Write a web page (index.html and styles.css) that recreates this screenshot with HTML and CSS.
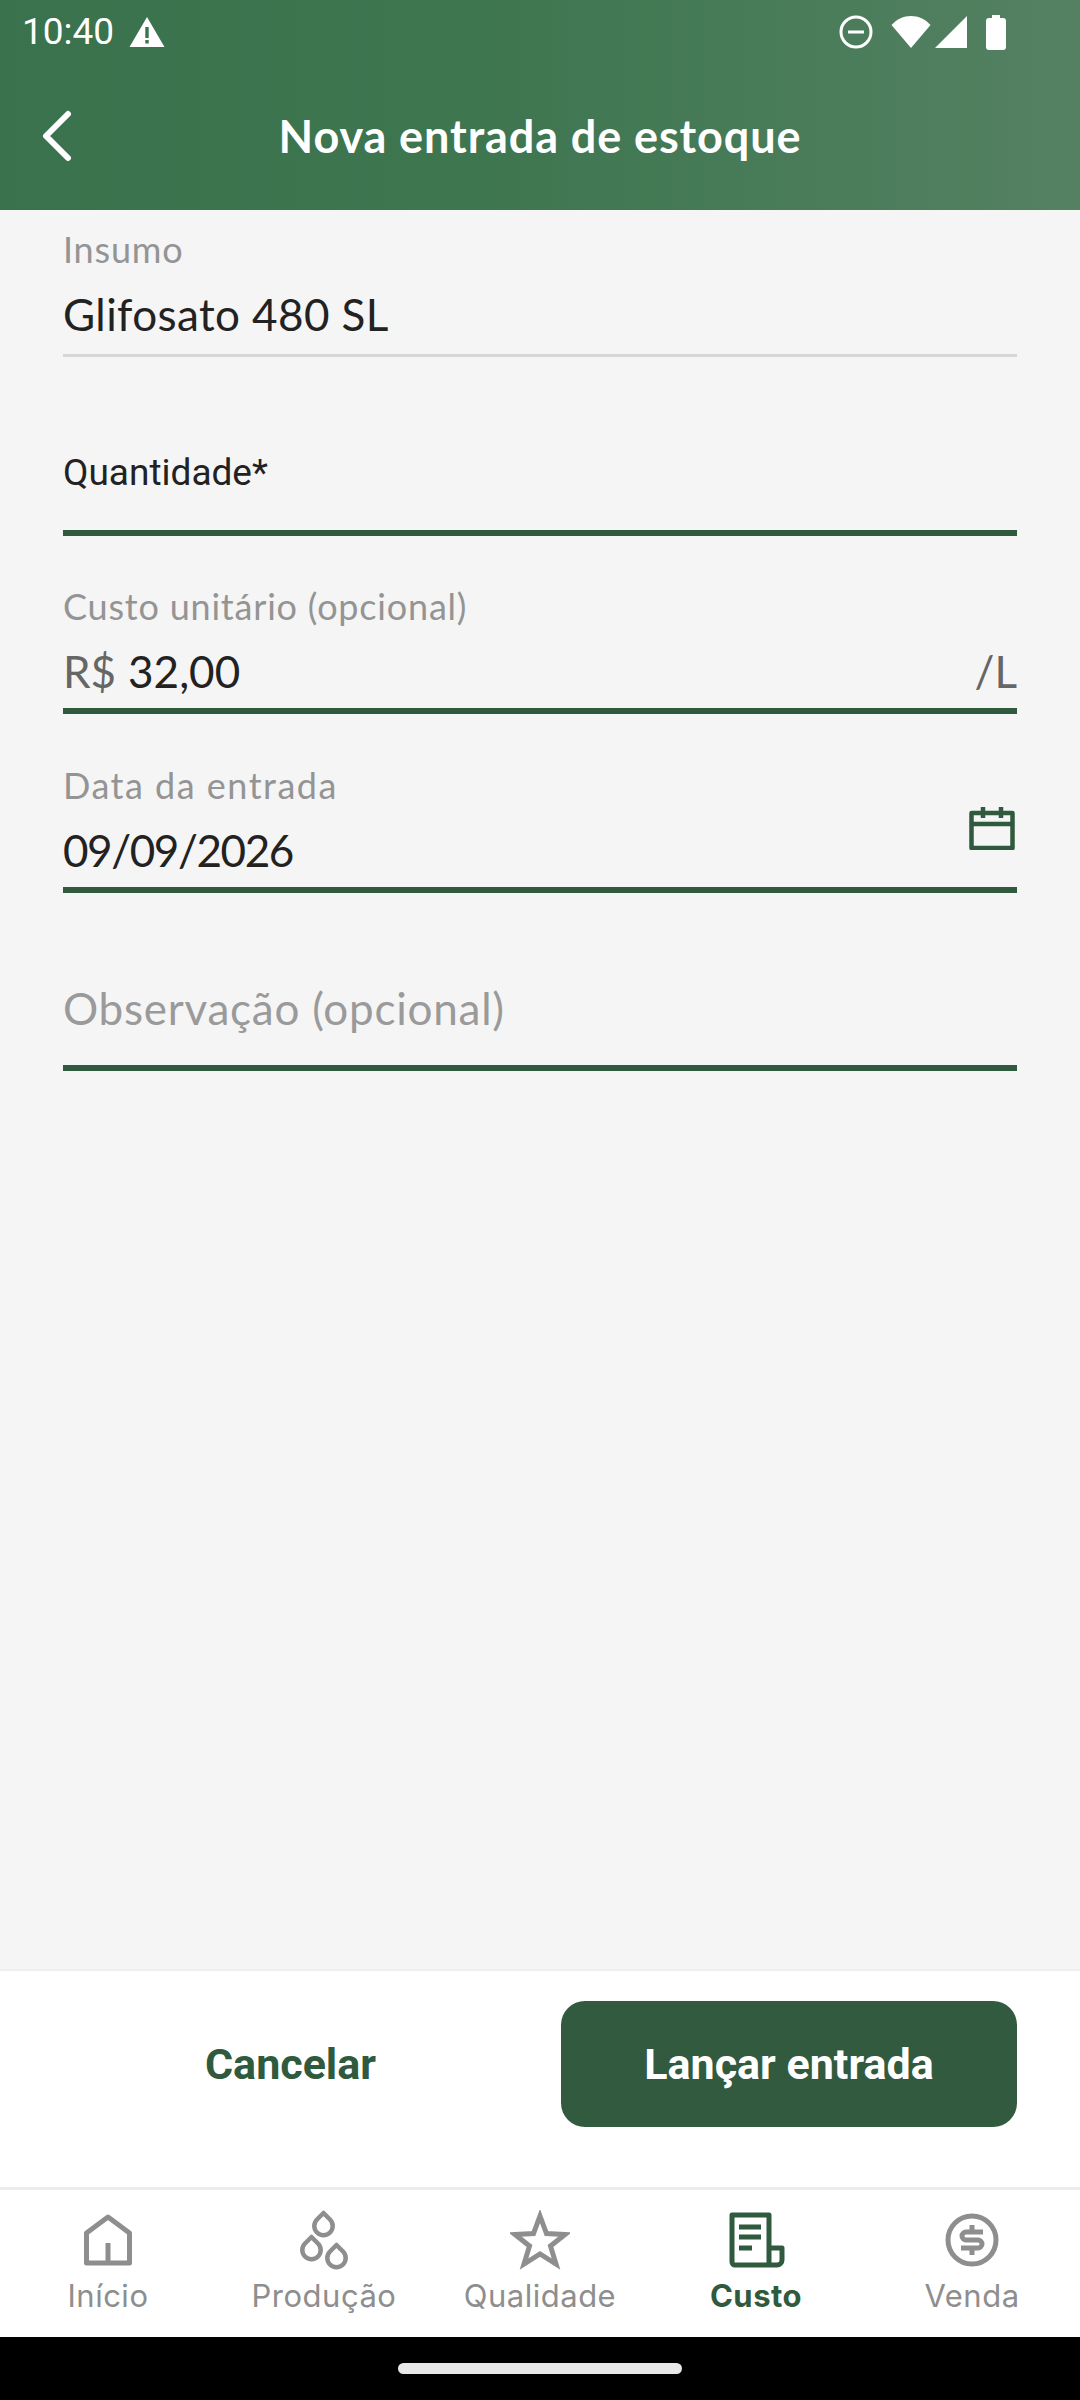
FILE: index.html
```html
<!DOCTYPE html>
<html lang="pt-BR">
<head>
  <meta charset="UTF-8">
  <meta name="viewport" content="width=device-width, initial-scale=1.0">
  <title>Nova entrada de estoque</title>
  <link rel="stylesheet" href="styles.css">
</head>
<body>
  <div class="screen">
    <header class="top">
      <div class="status-bar">
        <span class="time">10:40</span>
        <svg class="alert" width="36" height="32" viewBox="0 0 36 32"><path fill="#fff" fill-rule="evenodd" d="M18 1 35.500 31H.5ZM16.300 11v11h3.400V11Zm0 13v3.500h3.400V24Z"/></svg>
        <span class="status-icons">
          <svg width="34" height="34" viewBox="0 0 34 34"><circle cx="17" cy="17" r="15" fill="none" stroke="#fff" stroke-width="3"/><rect x="9" y="15.500" width="16" height="3" fill="#fff"/></svg>
          <svg width="40" height="34" viewBox="0 0 40 34"><path fill="#fff" d="M20 33 .5 10C6 4 12.500 1 20 1s14 3 19.500 9Z"/></svg>
          <svg width="33" height="34" viewBox="0 0 33 34"><path fill="#fff" d="M32 1v32H0Z"/></svg>
          <svg width="20" height="35" viewBox="0 0 20 35"><path fill="#fff" d="M6 0h8v3h3a3 3 0 0 1 3 3v26a3 3 0 0 1-3 3H3a3 3 0 0 1-3-3V6a3 3 0 0 1 3-3h3Z"/></svg>
        </span>
      </div>
      <div class="app-bar">
        <svg class="back" width="32" height="52" viewBox="0 0 32 52"><path fill="none" stroke="#fff" stroke-width="6" stroke-linecap="round" stroke-linejoin="round" d="M27 4 5 26l22 22"/></svg>
        <h1>Nova entrada de estoque</h1>
      </div>
    </header>

    <main class="form">
      <div class="field field-first">
        <label>Insumo</label>
        <div class="value"><span class="wide">Glifosato 480 SL</span></div>
      </div>
      <div class="field">
        <div class="prompt prompt-dark">Quantidade*</div>
      </div>
      <div class="field">
        <label>Custo unitário (opcional)</label>
        <div class="value">
          <span class="affix">R$</span>
          <span>32,00</span>
          <span class="affix suffix">/L</span>
        </div>
      </div>
      <div class="field">
        <label class="label-wide">Data da entrada</label>
        <div class="value">
          <span class="date">09/09/2026</span>
          <svg class="calendar" width="46" height="44" viewBox="0 0 46 44"><path fill="none" stroke="#2f5a3e" stroke-width="4.500" stroke-linejoin="round" d="M2.500 7h41v35h-41ZM2.500 18h41M14 1v11M32 1v11"/></svg>
        </div>
      </div>
      <div class="field">
        <div class="prompt">Observação (opcional)</div>
      </div>
    </main>

    <div class="actions">
      <button class="btn btn-text">Cancelar</button>
      <button class="btn btn-solid">Lançar entrada</button>
    </div>

    <nav class="tabs">
      <a class="tab">
        <svg width="60" height="60" viewBox="0 0 60 60"><path fill="none" stroke="#8e8e8e" stroke-width="5" stroke-linejoin="round" d="M30 7 8.500 23v30h43V23ZM30 53V33"/></svg>
        <span>Início</span>
      </a>
      <a class="tab">
        <svg width="60" height="60" viewBox="0 0 60 60"><g fill="none" stroke="#8e8e8e" stroke-width="4.500" stroke-linejoin="round"><path d="M29.500 3 36 9.500a9.200 9.200 0 1 1-13 0Z"/><path d="M17.500 27 24 33.500a9.200 9.200 0 1 1-13 0Z"/><path d="M42.500 35 49 41.500a9.200 9.200 0 1 1-13 0Z"/></g></svg>
        <span>Produção</span>
      </a>
      <a class="tab">
        <svg width="60" height="60" viewBox="0 0 60 60"><path fill="none" stroke="#8e8e8e" stroke-width="5" d="M30 6 36.500 23.500 55 24.500 40.500 36 46 54 30 44 14 54 19.500 36 5 24.500 23.500 23.500Z"/></svg>
        <span>Qualidade</span>
      </a>
      <a class="tab tab-active">
        <svg width="60" height="60" viewBox="0 0 60 60"><path fill="none" stroke="#2f5a3e" stroke-width="5" stroke-linejoin="round" d="M6 5h37v50H9a3 3 0 0 1-3-3ZM43 38h13v12a5 5 0 0 1-5 5h-8"/><path fill="none" stroke="#2f5a3e" stroke-width="5" d="M13 17h22M13 27h22M13 38h13"/></svg>
        <span>Custo</span>
      </a>
      <a class="tab">
        <svg width="60" height="60" viewBox="0 0 60 60"><circle cx="30" cy="30" r="24" fill="none" stroke="#8e8e8e" stroke-width="5"/><path fill="none" stroke="#8e8e8e" stroke-width="5" d="M41 22H24a4 4 0 0 0 0 8h12a4 4 0 0 1 0 8H19M30 15v7M30 38v7"/></svg>
        <span>Venda</span>
      </a>
    </nav>

    <div class="gesture-bar"><div class="gesture-pill"></div></div>
  </div>
</body>
</html>
```

FILE: styles.css
```css
body {
  margin: 0;
  font-family: Lato, "Noto Sans", sans-serif;
  background-color: #f5f5f5;
}
.screen {
  width: 1080px;
  height: 2400px;
  display: flex;
  flex-direction: column;
  overflow: hidden;
}

/* header */
.top {
  height: 210px;
  background: linear-gradient(90deg, #39724c 0%, #3e7650 45%, #548162 100%);
  color: #fff;
}
.status-bar {
  height: 64px;
  padding: 0 74px 0 22px;
  display: flex;
  align-items: center;
}
.time {
  font-family: Roboto, sans-serif;
  font-size: 37px;
  line-height: 64px;
}
.alert {
  margin-left: 15px;
}
.status-icons {
  margin-left: auto;
  display: flex;
  align-items: center;
  gap: 18px;
}
.status-icons svg:nth-child(3) {
  margin-left: -14px;
}
.app-bar {
  height: 146px;
  display: flex;
  align-items: center;
  justify-content: center;
  position: relative;
}
.back {
  position: absolute;
  left: 41px;
  top: 46px;
}
.app-bar h1 {
  margin: 0 0 2px;
  font-size: 45px;
  font-weight: 700;
  letter-spacing: 0.9px;
}

/* form */
.form {
  flex: 1;
  padding: 0 63px;
}
.field {
  height: 178.500px;
  box-sizing: border-box;
  border-bottom: 6px solid #2f5a3e;
  display: flex;
  flex-direction: column;
  justify-content: flex-end;
}
.field-first {
  height: 147px;
  border-bottom: 3px solid #d6d6d6;
}
.field-first .value {
  margin-bottom: 9px;
}
.field label {
  font-size: 36px;
  line-height: 44px;
  letter-spacing: 0.8px;
  color: #949494;
}
.field .label-wide {
  letter-spacing: 1.500px;
}
.value {
  height: 62px;
  font-size: 44px;
  line-height: 62px;
  margin: 12px 0 6px;
  color: #222;
  display: flex;
  align-items: center;
  gap: 12px;
  position: relative;
}
.wide {
  letter-spacing: 0.4px;
}
.date {
  letter-spacing: -1.400px;
}
.affix {
  color: #666;
}
.suffix {
  margin-left: auto;
}
.calendar {
  position: absolute;
  right: 2px;
  top: -13px;
}
.prompt {
  height: 87px;
  font-size: 44px;
  line-height: 60px;
  letter-spacing: 0.750px;
  color: #9a9a9a;
}
.prompt-dark {
  font-family: Roboto, sans-serif;
  font-size: 37px;
  letter-spacing: 0;
  color: #222;
}

/* buttons */
.actions {
  height: 221px;
  box-sizing: border-box;
  background: #fff;
  border-top: 2px solid #eeeeee;
  border-bottom: 3px solid #ececec;
  padding: 30px 63px 0 0;
  display: flex;
  justify-content: space-between;
}
.btn {
  height: 126px;
  border: none;
  font-family: Roboto, sans-serif;
  font-size: 43px;
  font-weight: 700;
  cursor: pointer;
}
.btn-text {
  width: 561px;
  padding: 0 0 0 20px;
  background: none;
  color: #2f5a3e;
}
.btn-solid {
  width: 456px;
  background-color: #315a3e;
  color: #fff;
  border-radius: 24px;
}

/* bottom nav */
.tabs {
  height: 147px;
  background: #fff;
  display: flex;
}
.tab {
  width: 216px;
  display: flex;
  flex-direction: column;
  align-items: center;
  padding-top: 20px;
  color: #8e8e8e;
  font-family: Inter, sans-serif;
  font-size: 31px;
  line-height: 38px;
  letter-spacing: 0.5px;
}
.tab svg {
  height: 60px;
  margin-bottom: 7px;
}
.tab-active {
  color: #2f5a3e;
  font-weight: 700;
}
.gesture-bar {
  height: 63px;
  background: #000;
  display: flex;
  justify-content: center;
  padding-top: 26px;
  box-sizing: border-box;
}
.gesture-pill {
  width: 284px;
  height: 11px;
  border-radius: 6px;
  background: #e8e8e8;
}
```
